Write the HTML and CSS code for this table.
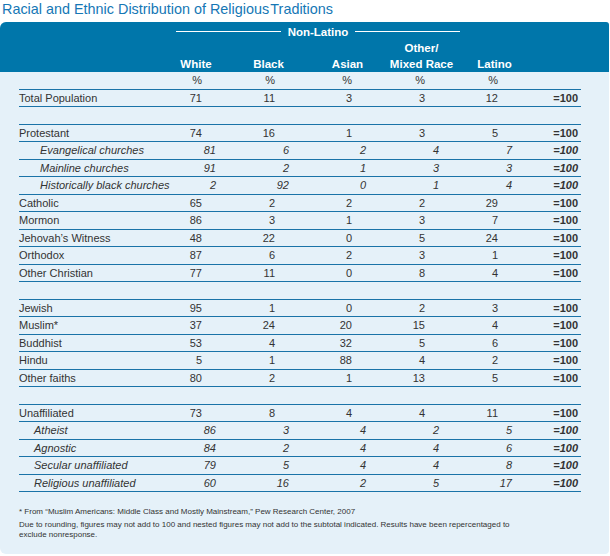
FILE: index.html
```html
<!DOCTYPE html>
<html>
<head>
<meta charset="utf-8">
<title>Racial and Ethnic Distribution of Religious Traditions</title>
<link rel="stylesheet" href="styles.css">
</head>
<body>
<h1 class="title">Racial and Ethnic Distribution of Religious&#8202;Traditions</h1>
<div class="panel">
  <div class="head">
    <div class="group"><span class="rule"></span><span class="group-label">Non-Latino</span><span class="rule"></span></div>
    <div class="cols">
      <div></div>
      <div>White</div>
      <div>Black</div>
      <div>Asian</div>
      <div>Other/<br>Mixed Race</div>
      <div>Latino</div>
    </div>
  </div>
  <div class="table">
    <div class="row units"><span class="label"></span><span>%</span><span>%</span><span>%</span><span>%</span><span>%</span><span class="total"></span></div>
    <div class="row"><span class="label">Total Population</span><span>71</span><span>11</span><span>3</span><span>3</span><span>12</span><span class="total">=100</span></div>

    <div class="section">
      <div class="row"><span class="label">Protestant</span><span>74</span><span>16</span><span>1</span><span>3</span><span>5</span><span class="total">=100</span></div>
      <div class="row sub sub-p"><span class="label">Evangelical churches</span><span>81</span><span>6</span><span>2</span><span>4</span><span>7</span><span class="total">=100</span></div>
      <div class="row sub sub-p"><span class="label">Mainline churches</span><span>91</span><span>2</span><span>1</span><span>3</span><span>3</span><span class="total">=100</span></div>
      <div class="row sub sub-p"><span class="label">Historically black churches</span><span>2</span><span>92</span><span>0</span><span>1</span><span>4</span><span class="total">=100</span></div>
      <div class="row"><span class="label">Catholic</span><span>65</span><span>2</span><span>2</span><span>2</span><span>29</span><span class="total">=100</span></div>
      <div class="row"><span class="label">Mormon</span><span>86</span><span>3</span><span>1</span><span>3</span><span>7</span><span class="total">=100</span></div>
      <div class="row"><span class="label">Jehovah’s Witness</span><span>48</span><span>22</span><span>0</span><span>5</span><span>24</span><span class="total">=100</span></div>
      <div class="row"><span class="label">Orthodox</span><span>87</span><span>6</span><span>2</span><span>3</span><span>1</span><span class="total">=100</span></div>
      <div class="row"><span class="label">Other Christian</span><span>77</span><span>11</span><span>0</span><span>8</span><span>4</span><span class="total">=100</span></div>
    </div>

    <div class="section">
      <div class="row"><span class="label">Jewish</span><span>95</span><span>1</span><span>0</span><span>2</span><span>3</span><span class="total">=100</span></div>
      <div class="row"><span class="label">Muslim*</span><span>37</span><span>24</span><span>20</span><span>15</span><span>4</span><span class="total">=100</span></div>
      <div class="row"><span class="label">Buddhist</span><span>53</span><span>4</span><span>32</span><span>5</span><span>6</span><span class="total">=100</span></div>
      <div class="row"><span class="label">Hindu</span><span>5</span><span>1</span><span>88</span><span>4</span><span>2</span><span class="total">=100</span></div>
      <div class="row"><span class="label">Other faiths</span><span>80</span><span>2</span><span>1</span><span>13</span><span>5</span><span class="total">=100</span></div>
    </div>

    <div class="section">
      <div class="row"><span class="label">Unaffiliated</span><span>73</span><span>8</span><span>4</span><span>4</span><span>11</span><span class="total">=100</span></div>
      <div class="row sub sub-u"><span class="label">Atheist</span><span>86</span><span>3</span><span>4</span><span>2</span><span>5</span><span class="total">=100</span></div>
      <div class="row sub sub-u"><span class="label">Agnostic</span><span>84</span><span>2</span><span>4</span><span>4</span><span>6</span><span class="total">=100</span></div>
      <div class="row sub sub-u"><span class="label">Secular unaffiliated</span><span>79</span><span>5</span><span>4</span><span>4</span><span>8</span><span class="total">=100</span></div>
      <div class="row sub sub-u"><span class="label">Religious unaffiliated</span><span>60</span><span>16</span><span>2</span><span>5</span><span>17</span><span class="total">=100</span></div>
    </div>
  </div>
  <div class="notes">
    <p>* From “Muslim Americans: Middle Class and Mostly Mainstream,” Pew Research Center, 2007</p>
    <p>Due to rounding, figures may not add to 100 and nested figures may not add to the subtotal indicated. Results have been repercentaged to exclude nonresponse.</p>
  </div>
</div>
</body>
</html>
```

FILE: styles.css
```css
* { box-sizing: border-box; }

body {
  margin: 0;
  background: #ffffff;
  font-family: "Liberation Sans", Arial, sans-serif;
  color: #333333;
}

.title {
  margin: 0;
  height: 22px;
  padding: 1px 0 0 2px;
  font-size: 14.4px;
  font-weight: normal;
  line-height: 16px;
  color: #1577b5;
  white-space: nowrap;
}

.panel {
  width: 609px;
  background: #e5f1f9;
  border-radius: 6px 3px 4px 6px;
  overflow: hidden;
  padding-bottom: 13px;
}

.head {
  background: #0076aa;
  height: 50px;
  color: #ffffff;
  font-weight: bold;
  font-size: 11.5px;
}

.group {
  display: flex;
  align-items: center;
  gap: 7px;
  margin-left: 176px;
  width: 284px;
  height: 18px;
  padding-top: 1px;
  line-height: 14px;
}

.rule {
  flex: 1;
  height: 1px;
  background: #ffffff;
}

.cols {
  display: grid;
  grid-template-columns: 160px 72px 73px 85px 63px 83px;
  height: 32px;
  align-items: end;
  line-height: 16px;
  text-align: center;
  white-space: nowrap;
}

.cols > div {
  display: flex;
  flex-direction: column;
  align-items: center;
}

.table {
  margin-left: 19px;
  width: 562px;
}

.row {
  display: grid;
  grid-template-columns: 151px 46px 73px 77px 73px 73px 69px;
  height: 17.5px;
  align-items: center;
  border-bottom: 1px solid #1a73a8;
  font-size: 11px;
  line-height: 16px;
}

.row > span {
  text-align: right;
  padding-right: 14px;
}

.row > .label {
  text-align: left;
  padding-right: 0;
  white-space: nowrap;
}

.row > .total {
  padding-right: 3px;
  font-weight: bold;
}

.row.sub > span {
  padding-right: 0;
  font-style: italic;
}

.row.sub > .total {
  padding-right: 3px;
}

.sub-p > .label { padding-left: 21px; }
.sub-u > .label { padding-left: 15px; }

.section {
  margin-top: 16.5px;
  border-top: 1px solid #1a73a8;
}

.notes {
  margin: 15px 0 0 19px;
  width: 520px;
  font-size: 8px;
  line-height: 10.5px;
}

.notes p {
  margin: 0 0 2px;
}

.notes p:last-child {
  margin-bottom: 0;
}
```
